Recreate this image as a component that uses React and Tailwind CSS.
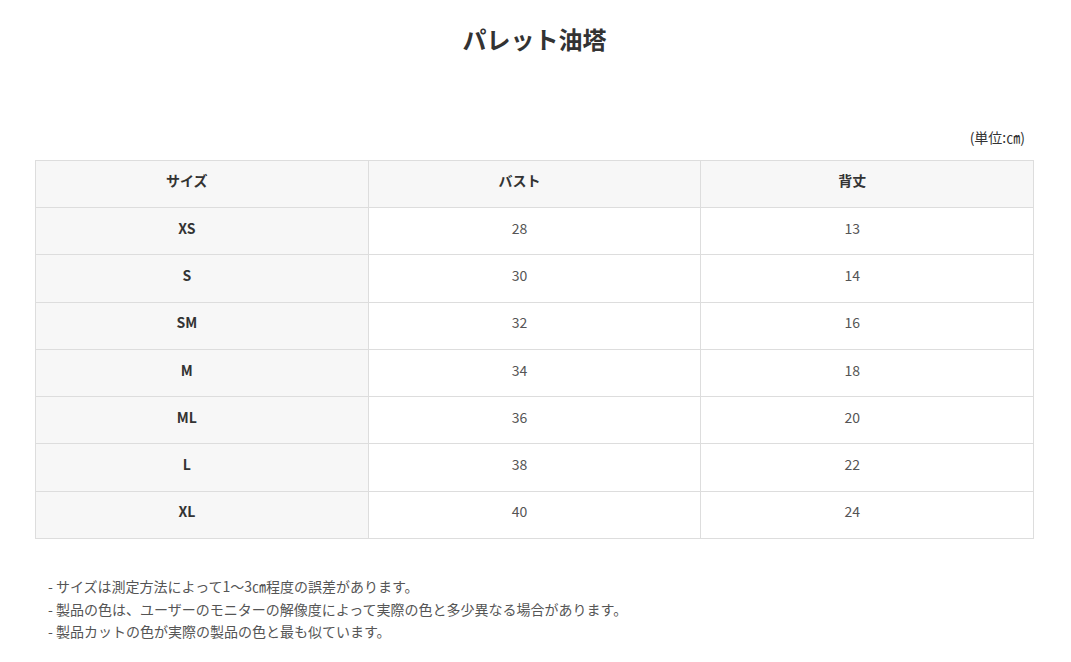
export default function App() {
  const rows = [
    ["XS", "28", "13"],
    ["S", "30", "14"],
    ["SM", "32", "16"],
    ["M", "34", "18"],
    ["ML", "36", "20"],
    ["L", "38", "22"],
    ["XL", "40", "24"],
  ];
  const font = { fontFamily: '"Noto Sans CJK JP", "Noto Sans", sans-serif' };
  return (
    <div className="w-[1071px] min-h-[662px] bg-white" style={font}>
      <div className="w-[999px] ml-[35px]">
        <h1 className="pt-[21px] text-center text-[24px] leading-[36px] font-bold text-[#333]">
          パレット油塔
        </h1>
        <div className="mt-[70px] pr-[9px] text-right text-[14px] leading-[21px] text-[#333]">
          (単位:㎝)
        </div>
        <table className="mt-[12px] w-full border-collapse table-fixed text-[14px]">
          <thead>
            <tr className="h-[47px]">
              {["サイズ", "バスト", "背丈"].map((h) => (
                <th
                  key={h}
                  className="border border-[#dddddd] bg-[#f7f7f7] font-bold text-[#333] text-center align-middle pr-[30px] pb-[7px]"
                >
                  {h}
                </th>
              ))}
            </tr>
          </thead>
          <tbody>
            {rows.map((r) => (
              <tr key={r[0]} className="h-[47.3px]">
                <td className="border border-[#dddddd] bg-[#f7f7f7] font-bold text-[#333] text-center align-middle pr-[30px] pb-[6px]">
                  {r[0]}
                </td>
                <td className="border border-[#dddddd] text-[#555] text-center align-middle pr-[30px] pb-[6px]">
                  {r[1]}
                </td>
                <td className="border border-[#dddddd] text-[#555] text-center align-middle pr-[30px] pb-[6px]">
                  {r[2]}
                </td>
              </tr>
            ))}
          </tbody>
        </table>
        <ul className="mt-[36px] pl-[13px] text-[14px] leading-[22.5px] text-[#555]">
          <li>- サイズは測定方法によって1～3㎝程度の誤差があります。</li>
          <li>- 製品の色は、ユーザーのモニターの解像度によって実際の色と多少異なる場合があります。</li>
          <li>- 製品カットの色が実際の製品の色と最も似ています。</li>
        </ul>
      </div>
    </div>
  );
}
